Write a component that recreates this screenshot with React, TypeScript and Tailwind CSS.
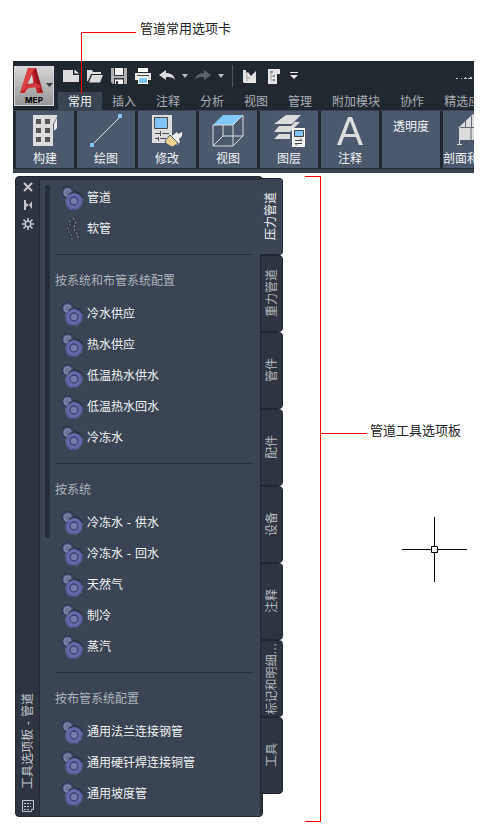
import type { ReactNode } from "react";
import clsx from "clsx";

const ribbonTabs = ["常用", "插入", "注释", "分析", "视图", "管理", "附加模块", "协作", "精选应"];

const paletteTabs = ["压力管道", "重力管道", "管件", "配件", "设备", "注释", "标记和明细...", "工具"];

const sections = [
  { title: "按系统和布管系统配置", items: ["冷水供应", "热水供应", "低温热水供水", "低温热水回水", "冷冻水"] },
  { title: "按系统", items: ["冷冻水 - 供水", "冷冻水 - 回水", "天然气", "制冷", "蒸汽"] },
  { title: "按布管系统配置", items: ["通用法兰连接钢管", "通用硬钎焊连接铜管", "通用坡度管"] },
];

function PipeIcon() {
  return (
    <svg width="24" height="24" viewBox="0 0 24 24" fill="none" aria-hidden="true">
      <path d="m1 5 2-3.500 5-1 4 2.500 1 4-3 5-5 .5L1.500 9Z" fill="#4b5078" stroke="#2d334a" />
      <circle cx="6.500" cy="6.500" r="3.600" fill="#6c7298" stroke="#8b90b0" />
      <path d="m7 12 1.500-4 5-2.500 5 2 3 4" stroke="#2a3044" strokeWidth="1.500" />
      <path d="m4 14 3-5 6-2.500 6 2.500 3 4.500-1.500 6-4 4h-8L5 20Z" fill="#5a5f9b" />
      <circle cx="13" cy="15" r="7" fill="#666bad" />
      <circle cx="13" cy="15" r="4" fill="#7479ab" stroke="#3c4173" strokeWidth="1.300" />
    </svg>
  );
}

function HoseIcon() {
  return (
    <svg width="24" height="24" viewBox="0 0 24 24" fill="none" strokeLinejoin="round" aria-hidden="true">
      <path d="m12 1 3 4-2 5 1 4 3 4v5M8 3l2 3-3 5 1 5 3 3v4" stroke="#252b35" strokeWidth="3" />
      <path d="m12 1 3 4-2 5 1 4 3 4v5" stroke="#737984" strokeWidth="1.500" strokeDasharray="3 1" />
      <path d="m8 3 2 3-3 5 1 5 3 3v4" stroke="#666c77" strokeWidth="1.500" strokeDasharray="3 1" />
    </svg>
  );
}

function LogoIcon() {
  return (
    <svg width="37" height="28" viewBox="0 0 37 28" className="shrink-0" aria-hidden="true">
      <path d="M4 26 12 1h8l7 25h-6l-1.500-6-8 1L8.500 26Z" fill="#c5222c" />
      <path d="M12 1h8l-3 3-8 17-5 5Z" fill="#dc4147" />
      <path d="m16 7-4.500 10 6-.8Z" fill="#d4d4d4" />
      <path d="m20 1 7 25-4-3-6-19Z" fill="#981820" />
      <path d="M8 20c6-4 11-4 16-2l1 4c-5-3-11-2-18 2Z" fill="#d8363f" />
      <path d="M30 16h7l-3.500 4Z" fill="#333b45" />
    </svg>
  );
}

function QuickButton({ label, children }: { label: string; children: ReactNode }) {
  return (
    <button type="button" aria-label={label} className="flex h-4 shrink-0 items-center">
      {children}
    </button>
  );
}

function Caret() {
  return (
    <svg width="6" height="4" viewBox="0 0 6 4" aria-hidden="true">
      <path d="M0 0h6L3 4Z" fill="#b9bdc2" />
    </svg>
  );
}

function QuickAccess() {
  return (
    <div className="flex h-[31px] items-center pb-[2px] pl-[9px]">
      <div className="flex gap-2">
        <QuickButton label="新建">
          <svg width="16" height="16" viewBox="0 0 16 16">
            <path d="M0 2h10v5h6v7H0Z" fill="#dcdcdc" />
            <path d="m11.500 1.500 4.500 4h-4.500Z" fill="#f4f4f4" />
          </svg>
        </QuickButton>
        <QuickButton label="打开">
          <svg width="16" height="16" viewBox="0 0 16 16" fill="#dcdcdc">
            <path d="M0 2h5l1 2h8v2H4L1 13H0Z" />
            <path d="M5 7h11l-3 7.500H2Z" />
          </svg>
        </QuickButton>
        <QuickButton label="保存">
          <svg width="16" height="16" viewBox="0 0 16 16">
            <path d="M0 0h16v16H2l-2-2Z" fill="#b0b0b0" />
            <path d="M3 0h10v8H3Z" fill="#333941" />
            <path d="M4 0h8v7H4Z" fill="#f1f1f1" />
            <path d="M3 10h10v6H3Z" fill="#333941" />
            <path d="M4 11.500h8V16H4Z" fill="#f5f5f5" />
            <path d="M5 13h2v3H5Z" fill="#333941" />
          </svg>
        </QuickButton>
        <QuickButton label="打印">
          <svg width="16" height="16" viewBox="0 0 16 16">
            <path d="M3 0h10v4H3Z" fill="#fff" />
            <path d="M0 5h16v7H0Z" fill="#e6e6e6" />
            <path d="M2 7h12v1H2Z" fill="#4a5059" />
            <path d="M3 9h10v7H3Z" fill="#fff" />
            <path d="M4 10h8v5H4Z" fill="#85c5f5" />
          </svg>
        </QuickButton>
        <QuickButton label="放弃">
          <svg width="16" height="16" viewBox="0 0 16 16">
            <path d="m0 7 7-5v3c5 0 8 2 9 7-2-3-5-3-9-3v3Z" fill="#dcdcdc" />
          </svg>
        </QuickButton>
      </div>
      <div className="ml-[7px] flex items-center gap-[7px]">
        <Caret />
        <QuickButton label="重做">
          <svg width="16" height="16" viewBox="0 0 16 16">
            <path d="M16 7 9 2v3C4 5 1 7 0 12c2-3 5-3 9-3v3Z" fill="#5d636b" />
          </svg>
        </QuickButton>
        <Caret />
      </div>
      <div className="mx-2 h-[22px] w-px shrink-0 bg-[#4d545d]" />
      <div className="ml-[2px] flex items-center gap-[10px]">
        <QuickButton label="项目浏览器">
          <svg width="15" height="16" viewBox="0 0 15 16">
            <path d="M0 2h3v3l2-1 3 4 5-5v12H1l-1-1Z" fill="#e4e4e4" />
            <path d="M4 6v7m0-3h3" stroke="#a1a6ac" fill="none" />
          </svg>
        </QuickButton>
        <QuickButton label="项目导航器">
          <svg width="12" height="16" viewBox="0 0 12 16">
            <path d="M0 1h12v5H9v10H0Z" fill="#e4e4e4" />
            <path d="M2 3h3v2H2Zm3 4h2v2H5Zm0 4h2v2H5Z" fill="#8b9198" />
            <path d="M3 5v7h2M3 8h2" stroke="#a0a5ab" fill="none" />
          </svg>
        </QuickButton>
        <QuickButton label="自定义快速访问工具栏">
          <svg width="8" height="7" viewBox="0 0 8 7" fill="#e6e6e6">
            <path d="M0 0h8v1H0ZM0 3h8L4 7Z" />
          </svg>
        </QuickButton>
      </div>
      <svg className="ml-auto shrink-0" width="18" height="16" viewBox="0 0 18 16" aria-hidden="true">
        <path d="M0 10.500h2m3 0h1m2 0h3m1 0h4M9 9.500h1m4 0h2" stroke="#c2c6ca" />
      </svg>
    </div>
  );
}

const panels: { label: string; icon?: ReactNode }[] = [
  {
    label: "构建",
    icon: (
      <svg width="32" height="34" viewBox="0 0 32 34">
        <path d="M4 1h24v2l-4 7v22H4Z" fill="#dcdcdc" />
        <path d="m25 10 3-6v10l-3 3Z" fill="#efefef" />
        <path d="M7 5h5v5H7Zm9 0h5v5h-5ZM7 14h5v5H7Zm9 0h5v5h-5ZM7 23h5v5H7Zm9 0h5v5h-5Z" fill="#555" />
      </svg>
    ),
  },
  {
    label: "绘图",
    icon: (
      <svg width="32" height="34" viewBox="0 0 32 34">
        <path d="M2 31 30 3" stroke="#dde1e6" />
        <path d="M0 29h4v4H0ZM28 0h4v4h-4Z" fill="#83c5f3" />
      </svg>
    ),
  },
  {
    label: "修改",
    icon: (
      <svg width="32" height="34" viewBox="0 0 32 34">
        <path d="M1 1h20v28H1Z" fill="#dcdcdc" />
        <path d="M3.500 3.500h13v11h-13Z" fill="#80c3f7" stroke="#4a4a4a" />
        <path d="M4 19.500h5m2 0h7M4 24.500h3m2 0h6M9.500 17v5m-2 1v4" stroke="#4a4a4a" />
        <path d="m22 21 4-3 1 2 4-2v4l-3 3 1 3-3 3-8-7Z" fill="#ededed" />
        <path d="m19 21 8 8-5 4c-4-1-7-3-8-6Z" fill="#f3d28d" stroke="#4c586b" />
      </svg>
    ),
  },
  {
    label: "视图",
    icon: (
      <svg width="34" height="34" viewBox="0 0 34 34" fill="none">
        <path d="M12 1h20l-10 10H2Z" fill="#80c8f7" />
        <path d="M12 11v11L2 32m10-10h10M2 11v21h20l10-10V1L22 11ZM22 11v21m0-10h10" stroke="#d8dce1" />
      </svg>
    ),
  },
  {
    label: "图层",
    icon: (
      <svg width="34" height="34" viewBox="0 0 34 34">
        <path d="M14 1h15l-9 9H2Z" fill="#dcdcdc" />
        <path d="m7 12-5 6h16l10-10h-5l-4 4Zm0 8-5 5h16v-5Z" fill="#dcdcdc" />
        <path d="M20.500 14.500h12v18h-12Z" fill="#f0f0f0" stroke="#fff" />
        <path d="M22.500 16.500h9v6h-9Z" fill="#80c5f7" stroke="#444" />
        <path d="M23 26.500h7l-2-2m2 5h-7l2 2" stroke="#444" fill="none" />
      </svg>
    ),
  },
  {
    label: "注释",
    icon: (
      <svg width="28" height="34" viewBox="0 0 28 34">
        <path
          d="M12 3h4l11 28h-4l-3-8H8l-3 8H1Zm2 4L9.200 20h9.600Z"
          fill="#dcdcdc"
          fillRule="evenodd"
        />
      </svg>
    ),
  },
  { label: "透明度" },
];

function Ribbon() {
  return (
    <header className="mx-[13px] overflow-hidden bg-[#212830]">
      <div className="flex">
        <button
          type="button"
          className="ml-px mt-[5px] flex h-10 w-10 shrink-0 flex-col items-center border border-[#d8d8d8] bg-linear-to-b from-[#d5d5d5] to-[#969696] text-black"
        >
          <LogoIcon />
          <span className="w-full text-center font-[Inter,sans-serif] text-[8px] font-bold leading-[10px] tracking-wide">
            MEP
          </span>
        </button>
        <div className="min-w-0 flex-1">
          <QuickAccess />
          <nav className="ml-1 flex h-[18px] overflow-hidden">
            {ribbonTabs.map((tab, i) => (
              <button
                key={tab}
                type="button"
                className={clsx(
                  "shrink-0 px-[10px] text-xs leading-[18px]",
                  i === 0 ? "bg-[#3a4350] text-[#f0f2f4]" : "text-[#a9adb3]"
                )}
              >
                {tab}
              </button>
            ))}
          </nav>
        </div>
      </div>
      <div className="flex gap-[3px] overflow-hidden border-t border-[#39424f] pl-[3px]">
        {panels.map((panel) => (
          <button
            key={panel.label}
            type="button"
            className="flex h-[57px] w-[58px] shrink-0 flex-col items-center bg-[#4c586b] pt-[3px] text-xs text-[#f0f2f4]"
          >
            {panel.icon}
            <span className={clsx("leading-[18px]", panel.icon ? "mt-px" : "mt-[3px]")}>{panel.label}</span>
          </button>
        ))}
        <button
          type="button"
          className="flex h-[57px] min-w-0 flex-1 flex-col items-start overflow-hidden whitespace-nowrap bg-[#4c586b] pt-[3px] text-xs text-[#f0f2f4]"
        >
          <svg className="ml-[14px] shrink-0" width="34" height="34" viewBox="0 0 34 34">
            <path d="M1 14 16 0l15 14h-2v12H3V14Z" fill="#dcdcdc" />
            <path d="M8.500 7v7m5.500 0v12M3 13.500h26M14.500 2v12" stroke="#636b78" fill="none" />
            <path d="M2.500 14v16M0 30.500h5" stroke="#dcdcdc" />
          </svg>
          <span className="mt-px leading-[18px]">剖面和</span>
        </button>
      </div>
      <div className="mt-px h-1 bg-[#39424f]" />
    </header>
  );
}

function PaletteItem({ label, icon }: { label: string; icon: ReactNode }) {
  return (
    <li>
      <button type="button" className="flex h-[31px] items-center gap-[2px] pl-[6px] text-xs text-[#f0f2f4]">
        {icon}
        <span>{label}</span>
      </button>
    </li>
  );
}

function ToolPalette() {
  return (
    <aside className="flex shrink-0 items-start font-['DejaVu_Sans','Noto_Sans_CJK_SC',sans-serif]">
      <div className="flex w-[248px] rounded-[4px] border border-[#222731] bg-[#2e3440] pr-[2px]">
        <div className="flex w-[23px] shrink-0 flex-col items-center pb-[3px] pt-[5px] text-[#c3c6cb]">
          <button type="button" aria-label="关闭">
            <svg width="12" height="10" viewBox="0 0 12 10" stroke="currentColor" strokeWidth="2">
              <path d="m2 1 8 8m0-8L2 9" />
            </svg>
          </button>
          <button type="button" aria-label="自动隐藏" className="mt-2">
            <svg width="12" height="10" viewBox="0 0 12 10" fill="currentColor">
              <path d="M2 0h2v10H2Zm2 3 3 2-3 2ZM10 1v8L7 5Z" />
            </svg>
          </button>
          <button type="button" aria-label="特性" className="mt-2">
            <svg width="12" height="12" viewBox="0 0 12 12" fill="none" stroke="currentColor">
              <circle cx="6" cy="6" r="2.800" strokeWidth="1.500" />
              <path d="M6 0v3m0 6v3M0 6h3m6 0h3M1.500 1.500 4 4m4 4 2.500 2.500m0-9L8 4M4 8l-2.500 2.500" strokeWidth="1.500" />
            </svg>
          </button>
          <h1 className="mt-auto rotate-180 text-xs leading-[18px] [text-orientation:sideways] [writing-mode:vertical-rl]">
            工具选项板 - 管道
          </h1>
          <svg className="mt-[10px]" width="14" height="14" viewBox="0 0 14 14" fill="none" stroke="#c3c6cb">
            <path d="M1.500 1.500h11v9h-2v2h-9Z" />
            <path d="M3 4.500h7M3 7.500h7M3 10.500h6" strokeDasharray="2 1" />
          </svg>
        </div>
        <div className="mt-[2px] flex min-w-0 flex-1 border-l border-t border-[#252b35] bg-[#3b4452] pb-[7px] pl-[5px] pr-[6px] pt-[2px]">
          <div className="mt-[3px] h-[353px] w-[5px] shrink-0 rounded-full bg-[#282e39]" />
          <div className="ml-[5px] min-w-0 flex-1">
            <ul>
              <PaletteItem label="管道" icon={<PipeIcon />} />
              <PaletteItem label="软管" icon={<HoseIcon />} />
            </ul>
            {sections.map((section) => (
              <section key={section.title} className="mt-[10px] border-t border-[#2a303b] pt-[17px]">
                <h2 className="mb-2 text-xs leading-[18px] text-[#aeb3ba]">{section.title}</h2>
                <ul>
                  {section.items.map((item) => (
                    <PaletteItem key={item} label={item} icon={<PipeIcon />} />
                  ))}
                </ul>
              </section>
            ))}
          </div>
        </div>
      </div>
      <div className="relative -ml-[3px] mt-[2px] flex flex-col">
        {paletteTabs.map((tab, i) => (
          <button
            key={tab}
            type="button"
            className={clsx(
              "flex h-[77px] w-[23px] items-center justify-center rounded-r-[4px] border border-[#222731] text-xs",
              i === 0 ? "border-l-0 bg-[#3b4452] text-[#f0f2f4]" : "bg-[#2e3440] text-[#b5b8be]"
            )}
          >
            <span className="rotate-180 whitespace-nowrap leading-[18px] [text-orientation:sideways] [writing-mode:vertical-rl]">
              {tab}
            </span>
          </button>
        ))}
      </div>
    </aside>
  );
}

export default function App() {
  return (
    <div className="min-h-screen bg-white font-['Noto_Sans_CJK_SC',sans-serif] text-[#222]">
      <div className="relative h-[61px] pl-[140px] pt-[18px]">
        <p className="text-[13px] leading-5">管道常用选项卡</p>
        {/* leader line down to the active ribbon tab */}
        <div className="absolute left-[81px] top-8 h-[62px] w-[55px] border-t border-[red]" />
        <div className="absolute left-[81px] top-8 h-[62px] w-px bg-[red]" />
      </div>
      <Ribbon />
      <main className="flex pl-[15px] pt-[3px]">
        <ToolPalette />
        <div className="ml-[22px] w-4 shrink-0 border-y border-r border-[red]" />
        <div className="h-[646px] min-w-0 flex-1">
          <div className="flex pt-[244px]">
            <div className="mt-[13px] h-px w-[46px] shrink-0 bg-[red]" />
            <p className="ml-[3px] whitespace-nowrap text-[13px] leading-5">管道工具选项板</p>
          </div>
          <svg className="ml-[81px] mt-[77px]" width="65" height="65" viewBox="0 0 65 65" fill="none" stroke="#000">
            <path d="M0 32.500h29m7 0h29M32.500 0v29m0 7v29" />
            <path d="M29.500 29.500h6v6h-6Z" />
          </svg>
        </div>
      </main>
    </div>
  );
}
